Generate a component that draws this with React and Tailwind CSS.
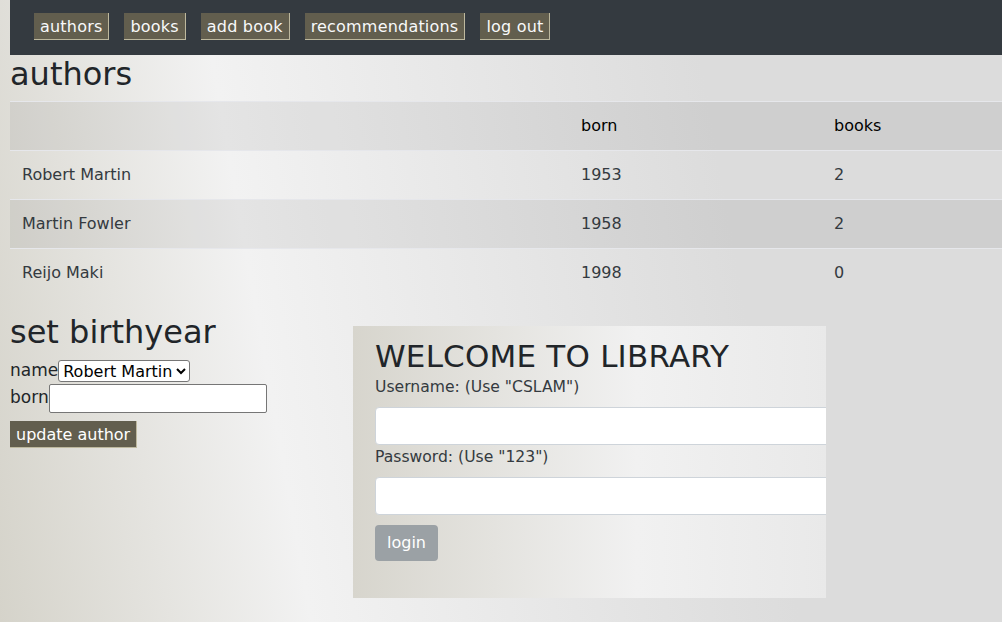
import { useState } from 'react'

const authors = [
  { name: 'Robert Martin', born: 1953, books: 2 },
  { name: 'Martin Fowler', born: 1958, books: 2 },
  { name: 'Reijo Maki', born: 1998, books: 0 },
]

const navItems = ['authors', 'books', 'add book', 'recommendations', 'log out']

export default function App() {
  const [selected, setSelected] = useState('Robert Martin')

  return (
    <div
      className="min-h-screen pl-[10px] text-[#212529] bg-[linear-gradient(80deg,#d5d3ca_0%,#f2f2f2_28%,#dcdcdc_72%)]"
      style={{ fontFamily: '"DejaVu Sans", sans-serif' }}
    >
      {/* Navbar */}
      <nav className="h-[55px] bg-[#343a40] flex items-start gap-[15px] pl-[24px] pt-[13px]">
        {navItems.map((item) => (
          <button
            key={item}
            className="bg-[#625e4e] text-[#f8f9fa] text-[16px] leading-[19px] tracking-[0.2px] px-[6px] pt-[4px] pb-[3px] border-r border-b border-[#bdb89e]"
          >
            {item}
          </button>
        ))}
      </nav>

      {/* Authors */}
      <h2 className="text-[32px] leading-[38px] mb-[8px]">authors</h2>
      <table className="w-full text-[16px] leading-[24px] mb-[16px] border-collapse">
        <thead>
          <tr className="bg-black/[0.055] border-t border-[#e6e7eb]">
            <th className="w-[559px] p-[12px] text-left font-normal"></th>
            <th className="w-[253px] p-[12px] text-left font-normal text-black">born</th>
            <th className="p-[12px] text-left font-normal text-black">books</th>
          </tr>
        </thead>
        <tbody>
          {authors.map((a, i) => (
            <tr
              key={a.name}
              className={`border-t border-[#e6e7eb] ${i % 2 === 1 ? 'bg-black/[0.055]' : ''}`}
            >
              <td className="p-[12px] text-[#343a40]">{a.name}</td>
              <td className="p-[12px] text-[#343a40]">{a.born}</td>
              <td className="p-[12px] text-[#343a40]">{a.books}</td>
            </tr>
          ))}
        </tbody>
      </table>

      <div className="flex items-start">
        {/* Set birthyear */}
        <div className="w-[343px]">
          <h2 className="text-[32px] leading-[38px] mb-[8px]">set birthyear</h2>
          <div className="flex items-center h-[24px] text-[17px]">
            name
            <select
              value={selected}
              onChange={(e) => setSelected(e.target.value)}
              className="h-[22px] bg-white text-black text-[16px] border border-[#767676] rounded-[3px]"
            >
              {authors.map((a) => (
                <option key={a.name}>{a.name}</option>
              ))}
            </select>
          </div>
          <div className="flex items-center h-[30px] text-[17px]">
            born
            <input className="w-[218px] h-[29px] bg-white border border-[#767676] rounded-[2px]" />
          </div>
          <button className="mt-[8px] bg-[#625e4e] text-white text-[16px] leading-[19px] px-[6px] pt-[4px] pb-[3px] border-r border-b border-[#bdb89e]">
            update author
          </button>
        </div>

        {/* Login box */}
        <div className="mt-[13px] w-[473px] h-[272px] pt-[12px] pl-[22px] overflow-hidden bg-[linear-gradient(to_right,#d7d5cd_0%,#f1f1f1_60%,#e9e9e9_100%)]">
          <h1 className="text-[31px] leading-[37px] tracking-[0.2px]">WELCOME TO LIBRARY</h1>
          <div className="text-[15.6px] leading-[24px] mb-[8px] text-[#343a40]">Username: (Use "CSLAM")</div>
          <input className="block w-[480px] h-[38px] bg-white border border-[#ced4da] rounded-[4px]" />
          <div className="text-[15.6px] leading-[24px] mb-[8px] text-[#343a40]">Password: (Use "123")</div>
          <input type="password" className="block w-[480px] h-[38px] bg-white border border-[#ced4da] rounded-[4px]" />
          <button className="mt-[10px] bg-[#9ba1a5] text-white text-[16px] leading-[24px] px-[12px] py-[6px] rounded-[4px]">
            login
          </button>
        </div>
      </div>
    </div>
  )
}
